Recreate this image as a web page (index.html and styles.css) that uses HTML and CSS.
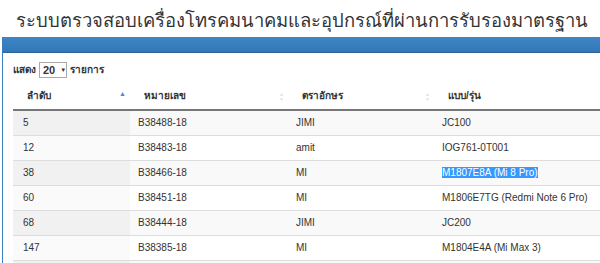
FILE: index.html
```html
<!DOCTYPE html>
<html lang="th">
<head>
<meta charset="utf-8">
<title>ระบบตรวจสอบ</title>
<link rel="stylesheet" href="styles.css">
</head>
<body>
<h1 class="title">ระบบตรวจสอบเครื่องโทรคมนาคมและอุปกรณ์ที่ผ่านการรับรองมาตรฐาน</h1>
<div class="panel">
  <div class="panel-head"></div>
  <div class="panel-body">
    <div class="length">แสดง <span class="select">20 <span class="caret">▼</span></span> รายการ</div>
    <table class="grid">
      <colgroup>
        <col class="c1"><col class="c2"><col class="c3"><col class="c4">
      </colgroup>
      <thead>
        <tr>
          <th class="sort-asc">ลำดับ</th>
          <th class="sort">หมายเลข</th>
          <th class="sort">ตราอักษร</th>
          <th>แบบ/รุ่น</th>
        </tr>
      </thead>
      <tbody>
        <tr class="odd"><td class="s">5</td><td>B38488-18</td><td>JIMI</td><td>JC100</td></tr>
        <tr class="even"><td class="s">12</td><td>B38483-18</td><td>amit</td><td>IOG761-0T001</td></tr>
        <tr class="odd"><td class="s">38</td><td>B38466-18</td><td>MI</td><td><span class="sel">M1807E8A (Mi 8 Pro)</span></td></tr>
        <tr class="even"><td class="s">60</td><td>B38451-18</td><td>MI</td><td>M1806E7TG (Redmi Note 6 Pro)</td></tr>
        <tr class="odd"><td class="s">68</td><td>B38444-18</td><td>JIMI</td><td>JC200</td></tr>
        <tr class="even"><td class="s">147</td><td>B38385-18</td><td>MI</td><td>M1804E4A (Mi Max 3)</td></tr>
        <tr class="odd"><td class="s">&nbsp;</td><td>&nbsp;</td><td>&nbsp;</td><td>&nbsp;</td></tr>
      </tbody>
    </table>
  </div>
</div>
</body>
</html>
```
FILE: styles.css
```css
html, body {
  margin: 0;
  padding: 0;
  background: #fff;
  overflow: hidden;
}
body {
  width: 600px;
  height: 263px;
  font-family: "Liberation Sans", Arial, "Noto Sans", sans-serif;
  color: #333;
}
.title {
  margin: 0;
  padding: 9px 0 0 16px;
  height: 28px;
  font-size: 18.4px;
  font-weight: normal;
  line-height: 24px;
  color: #333;
  white-space: nowrap;
}
.panel {
  margin-left: 2px;
  width: 598px;
  border-left: 1px solid #3a7cbd;
}
.panel-head {
  height: 15px;
  background: linear-gradient(#3f86c7, #3277b6);
  border-bottom: 1px solid #2a6299;
}
.panel-body {
  padding: 9px 0 0 10px;
}
.length {
  font-size: 10px;
  font-weight: bold;
  color: #333;
  height: 16px;
  line-height: 16px;
  display: flex;
  align-items: center;
  gap: 3px;
}
.select {
  display: inline-flex;
  align-items: center;
  gap: 5px;
  height: 14px;
  padding: 0 3px 0 3px;
  border: 1px solid #aaa;
  font-size: 11px;
  width: 20px;
}
.caret {
  font-size: 6px;
}
.grid {
  margin-top: 5px;
  border-collapse: collapse;
  table-layout: fixed;
  width: 587px;
  font-size: 10px;
}
.c1 { width: 117px; }
.c2 { width: 158px; }
.c3 { width: 146px; }
.c4 { width: 166px; }
.grid th {
  text-align: left;
  font-weight: bold;
  font-size: 10px;
  padding: 6px 14px 6px 14px;
  line-height: 14px;
  border-bottom: 2px solid #777;
  position: relative;
  color: #333;
}
.grid th.sort::after,
.grid th.sort-asc::after {
  position: absolute;
  right: 4px;
  top: 7px;
  font-size: 7px;
  line-height: 6px;
  white-space: pre;
}
.grid th.sort-asc::after {
  content: "▲";
  color: #5b7fd6;
  top: 8px;
}
.grid th.sort::after {
  content: "▲\A▼";
  color: #e2e2e2;
  font-size: 5px;
  line-height: 5px;
  top: 9px;
}
.grid td {
  padding: 5px 8px;
  line-height: 14px;
  border-top: 1px solid #ddd;
  white-space: nowrap;
  overflow: hidden;
  color: #333;
}
.grid tbody tr:first-child td {
  border-top: none;
}
.grid tr.odd td { background: #f9f9f9; }
.grid tr.even td { background: #fff; }
.grid tr.odd td.s { background: #f1f1f1; }
.grid tr.even td.s { background: #fafafa; }
.grid td.s { padding-left: 10px; }
.sel {
  background: #3399ff;
  color: #fff;
}
```
